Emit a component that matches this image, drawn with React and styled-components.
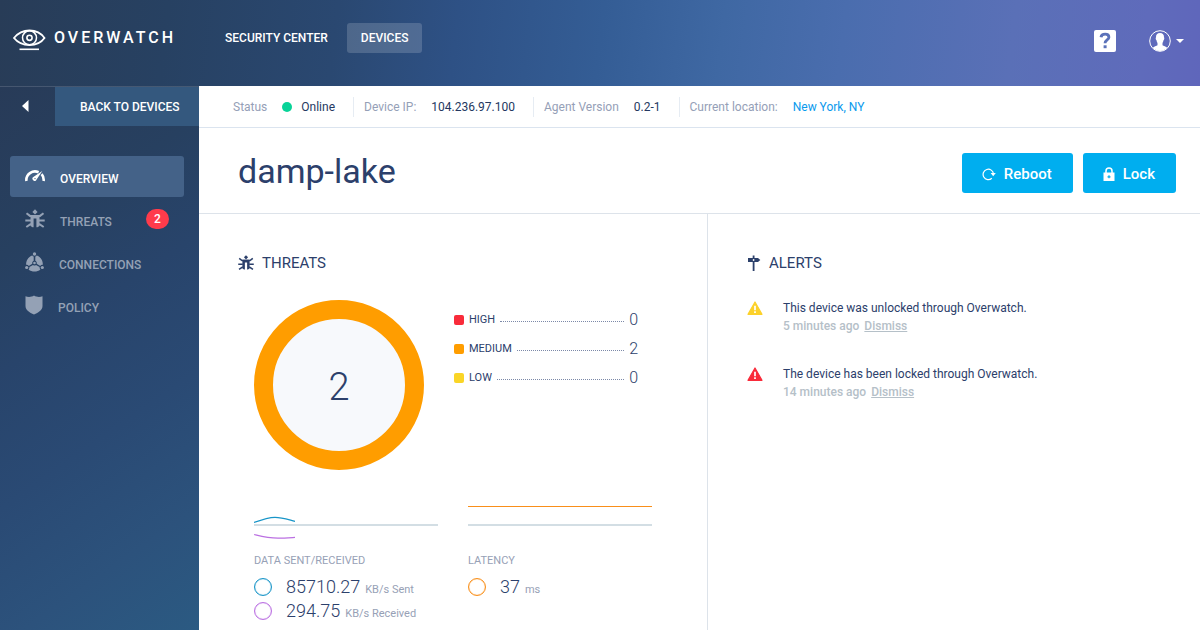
import React from "react";
import styled, { createGlobalStyle } from "styled-components";

const GlobalStyle = createGlobalStyle`
  *, *::before, *::after { box-sizing: border-box; }
  body {
    margin: 0;
    background: #fff;
    color: #2c406b;
    font-family: Roboto, "Liberation Sans", sans-serif;
    font-size: 12px;
    line-height: 18px;
  }
  h1, h2, h3, p, ul, dl, dd { margin: 0; padding: 0; font-weight: 400; }
  ul { list-style: none; }
  a { color: inherit; text-decoration: none; }
  svg { display: block; flex: none; }
  button { font-family: inherit; border: 0; cursor: pointer; }
`;

const Page = styled.div`
  min-height: 100vh;
  display: flex;
  flex-direction: column;
`;

const Header = styled.header`
  display: flex;
  align-items: flex-start;
  height: 86px;
  padding: 23px 16px 0 13px;
  color: #fff;
  background: linear-gradient(97deg, #283c57 0%, #274162 14%, #2a4871 28%, #2e5185 38%, #345d95 50%, #3f68a3 60%, #4a6dae 70%, #5a70b7 84%, #5f6bbb 95%, #5f66bb 100%);
`;

const Brand = styled.a`
  display: flex;
  align-items: center;
  gap: 7px;
  width: 198px;
  height: 30px;
  font-size: 16px;
  font-weight: 500;
  letter-spacing: 3px;
`;

const Nav = styled.nav`
  display: flex;
  gap: 5px;
  flex: 1;
`;

const NavLink = styled.a`
  height: 30px;
  padding: 0 14px;
  border-radius: 3px;
  font-size: 12px;
  font-weight: 500;
  line-height: 30px;
  background: ${(p) => (p.$active ? "rgba(255,255,255,0.17)" : "transparent")};
`;

const HeaderTools = styled.div`
  display: flex;
  align-items: center;
  gap: 33px;
  height: 36px;
`;

const ToolButton = styled.button`
  display: flex;
  align-items: center;
  gap: 5px;
  padding: 0;
  color: #fff;
  background: none;
`;

const Body = styled.div`
  flex: 1;
  display: flex;
`;

const Sidebar = styled.aside`
  flex: none;
  width: 199px;
  color: #fff;
  background: linear-gradient(145deg, #283b58 0%, #274060 25%, #28446b 42%, #2a4a74 62%, #2c527c 82%, #2b5a82 100%);
`;

const BackLink = styled.a`
  display: flex;
  height: 40px;
  border-top: 1px solid rgba(255, 255, 255, 0.14);
  font-size: 12px;
  font-weight: 500;
  line-height: 40px;
`;

const BackArrow = styled.span`
  display: flex;
  align-items: center;
  width: 55px;
  padding: 0 0 2px 22px;
`;

const BackText = styled.span`
  flex: 1;
  padding-left: 25px;
  background: #34587e;
`;

const Menu = styled.ul`
  display: grid;
  gap: 2px;
  padding: 30px 15px 0 10px;
`;

const MenuLink = styled.a`
  display: flex;
  align-items: center;
  gap: 15px;
  height: 41px;
  padding: 5px 15px 0;
  border-radius: 3px;
  font-weight: 500;
  color: ${(p) => (p.$active ? "#fff" : "#94a1b5")};
  background: ${(p) => (p.$active ? "#446288" : "transparent")};

  svg { margin-bottom: 6px; }
`;

const Badge = styled.span`
  width: 23px;
  height: 20px;
  margin: 0 0 6px auto;
  border-radius: 10px;
  text-align: center;
  line-height: 20px;
  color: #fff;
  background: #ff3b4b;
`;

const Main = styled.main`
  flex: 1;
  min-width: 0;
  display: flex;
  flex-direction: column;
`;

const StatusBar = styled.dl`
  display: flex;
  align-items: center;
  height: 42px;
  padding-left: 34px;
  border-bottom: 1px solid #dbe4ef;
`;

const StatusItem = styled.div`
  display: flex;
  align-items: center;
  gap: 15px;
  height: 20px;
  padding-right: 18px;

  & + & {
    padding-left: 10px;
    border-left: 1px solid #e6ecf3;
  }

  dt { color: #95a0b7; }
  dd { color: ${(p) => (p.$link ? "#0a9aed" : "#24385f")}; }
`;

const OnlineValue = styled.dd`
  display: flex;
  align-items: center;
  gap: 9px;

  &::before {
    content: "";
    width: 10px;
    height: 10px;
    border-radius: 50%;
    background: #08d398;
  }
`;

const TitleRow = styled.div`
  display: flex;
  align-items: center;
  justify-content: space-between;
  height: 86px;
  padding: 4px 24px 0 39px;
  border-bottom: 1px solid #dde3ea;
`;

const Title = styled.h1`
  padding-bottom: 4px;
  font-size: 34px;
  line-height: 42px;
`;

const Actions = styled.div`
  display: flex;
  gap: 10px;
`;

const ActionButton = styled.button`
  display: flex;
  align-items: center;
  gap: 8px;
  height: 40px;
  padding: 3px 21px 0 20px;
  border-radius: 3px;
  font-size: 15px;
  font-weight: 500;
  color: #fff;
  background: #00aeef;
`;

const Columns = styled.div`
  flex: 1;
  display: grid;
  grid-template-columns: 508fr 493fr;
`;

const Panel = styled.section`
  padding: 40px 39px 0;

  & + & { border-left: 1px solid #dde3ea; }
`;

const PanelTitle = styled.h2`
  display: flex;
  align-items: center;
  gap: 8px;
  font-size: 15px;
  line-height: 18px;
`;

const ThreatSummary = styled.div`
  display: flex;
  gap: 30px;
  padding: 28px 0 0 16px;
`;

const Donut = styled.div`
  display: flex;
  align-items: center;
  justify-content: center;
  flex: none;
  width: 170px;
  height: 170px;
  padding-top: 4px;
  border: 19px solid #ff9d00;
  border-radius: 50%;
  font-size: 38px;
  font-weight: 300;
  background: #f7f9fc;
`;

const Legend = styled.ul`
  width: 184px;
  padding-top: 5px;
`;

const LegendRow = styled.li`
  display: flex;
  align-items: center;
  height: 29px;
  font-size: 11px;
`;

const Swatch = styled.span`
  width: 10px;
  height: 10px;
  margin-right: 5px;
  border-radius: 2px;
  background: ${(p) => p.$color};
`;

const Leader = styled.span`
  flex: 1;
  height: 4px;
  margin: 0 5px;
  border-bottom: 1px dotted #7c89a8;
`;

const Count = styled.span`
  font-size: 16px;
  font-weight: 300;
`;

const Metrics = styled.div`
  display: flex;
  gap: 30px;
  padding: 30px 0 0 16px;
`;

const Metric = styled.div`
  width: 184px;

  h3 {
    padding: 7px 0 8px;
    font-size: 11px;
    line-height: 12px;
    color: #97a1b6;
  }
`;

const Reading = styled.p`
  display: flex;
  align-items: center;
  height: 24px;
`;

const Dot = styled.span`
  width: 18px;
  height: 18px;
  margin-right: 14px;
  border: 1px solid ${(p) => p.$color};
  border-radius: 50%;
  box-shadow: inset 0 0 1px ${(p) => p.$color};
`;

const Amount = styled.span`
  padding-top: 2px;
  font-size: 18px;
  font-weight: 300;
  line-height: 22px;

  small {
    margin-left: 5px;
    font-size: 11px;
    font-weight: 400;
    color: #97a1b6;
  }
`;

const AlertList = styled.ul`
  display: grid;
  gap: 30px;
  padding-top: 27px;
`;

const Alert = styled.li`
  display: flex;
  gap: 20px;

  svg { margin-top: 2px; }
`;

const AlertMeta = styled.p`
  font-weight: 500;
  color: #b5c0c8;
`;

const DismissButton = styled.button`
  padding: 0;
  margin-left: 5px;
  font: inherit;
  color: inherit;
  text-decoration: underline;
  background: none;
`;

const EyeLogo = () => (
  <svg width="34" height="26" viewBox="0 0 34 26" fill="none" stroke="#fff" aria-hidden="true">
    <path d="M1 13C5 8 10 5.500 16.500 5.500S28 8 31.500 13C28 18 23 20 16.500 20S5 18 1 13Z" strokeWidth="1.800" />
    <circle cx="16.500" cy="12.800" r="7" strokeWidth="1.500" />
    <circle cx="16.500" cy="12.800" r="2.600" strokeWidth="1.600" />
    <path d="M6.500 24.300H26" strokeWidth="1.600" />
  </svg>
);

const HelpIcon = () => (
  <svg width="22" height="22" viewBox="0 0 22 22" aria-hidden="true">
    <rect width="22" height="22" rx="2" fill="#fff" />
    <path d="M7 7.200C7.300 5 9 4.200 11.200 4.200C13.500 4.200 14.900 5.400 14.900 7.200C14.900 9.800 11 10 11 13.200" fill="none" stroke="#5b72b9" strokeWidth="2.800" />
    <rect x="9.600" y="15.300" width="3" height="2.900" fill="#5b72b9" />
  </svg>
);

const AvatarIcon = () => (
  <svg width="22" height="22" viewBox="0 0 22 22" aria-hidden="true">
    <circle cx="11" cy="11" r="10.300" fill="none" stroke="#fff" strokeWidth="1" />
    <path d="M11 3C8.200 3 6.900 4.700 7 7.200C6.400 8 6.800 9.700 7.500 10.300C7.700 11.800 8.300 12.500 8.500 13.200V15.200C7.500 16.200 5 16.300 3.800 17.800C7.500 22 14.500 22 18.200 17.800C17 16.300 14.500 16.200 13.500 15.200V13.200C13.700 12.500 14.300 11.800 14.500 10.300C15.200 9.700 15.600 8 15 7.200C15.100 4.700 13.800 3 11 3Z" fill="#fff" />
  </svg>
);

const CaretIcon = () => (
  <svg width="8" height="4" viewBox="0 0 8 4" aria-hidden="true"><path d="M0 0H8L4 4Z" fill="#fff" /></svg>
);

const ArrowIcon = () => (
  <svg width="7" height="12" viewBox="0 0 7 12" aria-hidden="true"><path d="M6.500 0V12L0 6Z" fill="#fff" /></svg>
);

const GaugeIcon = () => (
  <svg width="20" height="20" viewBox="0 0 20 20" aria-hidden="true">
    <path d="M1.400 15A8.700 8.700 0 0 1 13.600 6.200M16.600 8.200A8.700 8.700 0 0 1 18.600 15" fill="none" stroke="currentColor" strokeWidth="2.600" />
    <path d="M17.300 5L11.600 13.500A2.100 2.100 0 1 1 8.300 11.100Z" fill="currentColor" />
    <circle cx="10" cy="12.600" r="0.700" fill="#446288" />
  </svg>
);

const BugIcon = ({ size }) => (
  <svg width={size} height={size} viewBox="0 0 20 20" aria-hidden="true">
    <path d="M10 0.300L12.600 2.900L10 5.500L7.400 2.900Z" fill="currentColor" />
    <path d="M5.500 6H14.500V17L12.500 18.200H11.400V9.500H8.600V18.200H7.500L5.500 17Z" fill="currentColor" />
    <path d="M1.500 4.200L5 6.900H15L18.500 4.200M0.300 11.500H6M14 11.500H19.700M1.300 18L6 14.800M18.700 18L14 14.800" fill="none" stroke="currentColor" strokeWidth="2" />
  </svg>
);

const ConnectionsIcon = () => (
  <svg width="19" height="20" viewBox="0 0 19 20" fill="currentColor" aria-hidden="true">
    <circle cx="9.500" cy="2" r="1.700" />
    <circle cx="1.700" cy="15.500" r="1.600" />
    <circle cx="17.300" cy="15.500" r="1.600" />
    <path d="M7.400 3.400C3.200 4.700 0.800 8.800 1.200 12.900C2.200 12.700 3.200 13.100 3.800 13.900L7.300 11.700C7 10.600 7.600 9.200 8.700 8.800V4.500C8.100 4.300 7.700 3.900 7.400 3.400Z" />
    <path d="M11.600 3.400C15.800 4.700 18.200 8.800 17.800 12.900C16.800 12.700 15.800 13.100 15.200 13.900L11.700 11.700C12 10.600 11.400 9.200 10.300 8.800V4.500C10.900 4.300 11.300 3.900 11.600 3.400Z" />
    <circle cx="9.500" cy="11" r="1.300" />
    <path d="M8 12.900C9 13.600 10 13.600 11 12.900L14.600 15.100C14.500 16 14.800 16.900 15.400 17.400C12.200 20.200 6.800 20.200 3.600 17.400C4.200 16.900 4.500 16 4.400 15.100Z" />
  </svg>
);

const ShieldIcon = () => (
  <svg width="18" height="20" viewBox="0 0 18 20" aria-hidden="true">
    <path d="M0.500 1.200C3 2.400 6.500 2.200 9 0.500C11.500 2.200 15 2.400 17.500 1.200V11C17.500 15.200 13.500 17.500 9 19.600C4.500 17.500 0.500 15.200 0.500 11Z" fill="currentColor" />
  </svg>
);

const RebootIcon = () => (
  <svg width="14" height="14" viewBox="0 0 14 14" aria-hidden="true">
    <path d="M9.800 11.300A5.200 5.200 0 1 1 11.500 7" fill="none" stroke="#fff" strokeWidth="1.200" />
    <path d="M8.600 6H13.800L11.200 9.200Z" fill="#fff" />
  </svg>
);

const LockIcon = () => (
  <svg width="12" height="14" viewBox="0 0 12 14" aria-hidden="true">
    <path d="M3 6.500V4A3 3 0 0 1 9 4V6.500" fill="none" stroke="#fff" strokeWidth="1.500" />
    <rect x="0.500" y="5.500" width="11" height="8.500" fill="#fff" />
    <path d="M6 8.300V11.300M4.500 9.800H7.500" stroke="#00aeef" strokeWidth="1.200" />
  </svg>
);

const SignIcon = () => (
  <svg width="14" height="16" viewBox="0 0 14 16" fill="currentColor" aria-hidden="true">
    <rect x="5.700" y="0.500" width="1.800" height="15.500" />
    <path d="M1 3H11L13.300 5L11 7H1Z" />
    <circle cx="6.600" cy="5" r="0.900" fill="#fff" />
  </svg>
);

const WarningIcon = ({ color }) => (
  <svg width="16" height="14" viewBox="0 0 16 14" aria-hidden="true">
    <path d="M8 1L15 13.300H1Z" fill={color} stroke={color} strokeWidth="1.200" strokeLinejoin="round" />
    <path d="M8 4.700V9.200M8 10.300V12" stroke="#fff" strokeWidth="1.700" />
  </svg>
);

const TrafficChart = () => (
  <svg width="184" height="48" viewBox="0 0 184 48" fill="none" aria-hidden="true">
    <path d="M0 25H184" stroke="#d3dee4" strokeWidth="2" />
    <path d="M0 22.500C8 19.500 14 17.300 21 17.300C28 17.300 34 19.500 41 21.300" stroke="#1895c8" strokeWidth="1.200" />
    <path d="M0 34.500C8 36.500 14 38.200 24 38.200C30 38.200 35 37.800 41 37.400" stroke="#bb70e2" strokeWidth="1.200" />
  </svg>
);

const LatencyChart = () => (
  <svg width="184" height="48" viewBox="0 0 184 48" fill="none" aria-hidden="true">
    <path d="M0 6.500H184" stroke="#f98f1a" />
    <path d="M0 25H184" stroke="#d3dee4" strokeWidth="2" />
  </svg>
);

const menu = [
  { label: "OVERVIEW", icon: <GaugeIcon />, active: true },
  { label: "THREATS", icon: <BugIcon size={20} />, badge: 2 },
  { label: "CONNECTIONS", icon: <ConnectionsIcon /> },
  { label: "POLICY", icon: <ShieldIcon /> },
];

const levels = [
  { label: "HIGH", count: 0, color: "#f92b3a" },
  { label: "MEDIUM", count: 2, color: "#ff9d00" },
  { label: "LOW", count: 0, color: "#fad526" },
];

const alerts = [
  { text: "This device was unlocked through Overwatch.", time: "5 minutes ago", color: "#fcd12a" },
  { text: "The device has been locked through Overwatch.", time: "14 minutes ago", color: "#f92b3a" },
];

export default function App() {
  return (
    <Page>
      <GlobalStyle />
      <Header>
        <Brand href="#"><EyeLogo />OVERWATCH</Brand>
        <Nav>
          <NavLink href="#">SECURITY CENTER</NavLink>
          <NavLink href="#" $active>DEVICES</NavLink>
        </Nav>
        <HeaderTools>
          <ToolButton aria-label="Help"><HelpIcon /></ToolButton>
          <ToolButton aria-label="Account"><AvatarIcon /><CaretIcon /></ToolButton>
        </HeaderTools>
      </Header>
      <Body>
        <Sidebar>
          <BackLink href="#">
            <BackArrow><ArrowIcon /></BackArrow>
            <BackText>BACK TO DEVICES</BackText>
          </BackLink>
          <Menu>
            {menu.map((m) => (
              <li key={m.label}>
                <MenuLink href="#" $active={m.active}>
                  {m.icon}
                  {m.label}
                  {m.badge && <Badge>{m.badge}</Badge>}
                </MenuLink>
              </li>
            ))}
          </Menu>
        </Sidebar>
        <Main>
          <StatusBar>
            <StatusItem><dt>Status</dt><OnlineValue>Online</OnlineValue></StatusItem>
            <StatusItem><dt>Device IP:</dt><dd>104.236.97.100</dd></StatusItem>
            <StatusItem><dt>Agent Version</dt><dd>0.2-1</dd></StatusItem>
            <StatusItem $link><dt>Current location:</dt><dd><a href="#">New York, NY</a></dd></StatusItem>
          </StatusBar>
          <TitleRow>
            <Title>damp-lake</Title>
            <Actions>
              <ActionButton><RebootIcon />Reboot</ActionButton>
              <ActionButton><LockIcon />Lock</ActionButton>
            </Actions>
          </TitleRow>
          <Columns>
            <Panel>
              <PanelTitle><BugIcon size={16} />THREATS</PanelTitle>
              <ThreatSummary>
                <Donut>2</Donut>
                <Legend>
                  {levels.map((l) => (
                    <LegendRow key={l.label}>
                      <Swatch $color={l.color} />{l.label}<Leader /><Count>{l.count}</Count>
                    </LegendRow>
                  ))}
                </Legend>
              </ThreatSummary>
              <Metrics>
                <Metric>
                  <TrafficChart />
                  <h3>DATA SENT/RECEIVED</h3>
                  <Reading><Dot $color="#1895c8" /><Amount>85710.27<small>KB/s Sent</small></Amount></Reading>
                  <Reading><Dot $color="#bb70e2" /><Amount>294.75<small>KB/s Received</small></Amount></Reading>
                </Metric>
                <Metric>
                  <LatencyChart />
                  <h3>LATENCY</h3>
                  <Reading><Dot $color="#f98f1a" /><Amount>37<small>ms</small></Amount></Reading>
                </Metric>
              </Metrics>
            </Panel>
            <Panel>
              <PanelTitle><SignIcon />ALERTS</PanelTitle>
              <AlertList>
                {alerts.map((a) => (
                  <Alert key={a.text}>
                    <WarningIcon color={a.color} />
                    <div>
                      <p>{a.text}</p>
                      <AlertMeta>{a.time}<DismissButton>Dismiss</DismissButton></AlertMeta>
                    </div>
                  </Alert>
                ))}
              </AlertList>
            </Panel>
          </Columns>
        </Main>
      </Body>
    </Page>
  );
}
